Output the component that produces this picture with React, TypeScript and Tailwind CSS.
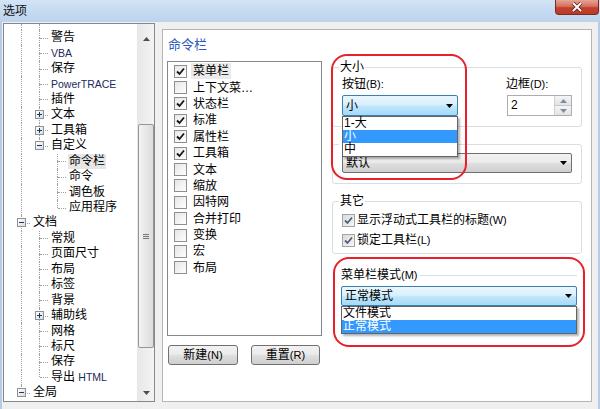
import type { ReactNode } from "react"

type TreeRow = {
    label: ReactNode
    guides: boolean[]
    last?: boolean
    box?: "+" | "-"
    sel?: boolean
}

const Lat = ({ children }: { children: ReactNode }) => (
    <span className="text-[10.5px] text-[#1b2a5c]">{children}</span>
)

const tree: TreeRow[] = [
    { label: "警告", guides: [true] },
    { label: <Lat>VBA</Lat>, guides: [true] },
    { label: "保存", guides: [true] },
    { label: <Lat>PowerTRACE</Lat>, guides: [true] },
    { label: "插件", guides: [true] },
    { label: "文本", guides: [true], box: "+" },
    { label: "工具箱", guides: [true], box: "+" },
    { label: "自定义", guides: [true], box: "-", last: true },
    { label: "命令栏", guides: [true, false], sel: true },
    { label: "命令", guides: [true, false] },
    { label: "调色板", guides: [true, false] },
    { label: "应用程序", guides: [true, false], last: true },
    { label: "文档", guides: [], box: "-" },
    { label: "常规", guides: [true] },
    { label: "页面尺寸", guides: [true] },
    { label: "布局", guides: [true] },
    { label: "标签", guides: [true] },
    { label: "背景", guides: [true] },
    { label: "辅助线", guides: [true], box: "+" },
    { label: "网格", guides: [true] },
    { label: "标尺", guides: [true] },
    { label: "保存", guides: [true] },
    { label: <>导出 <Lat>HTML</Lat></>, guides: [true], last: true },
    { label: "全局", guides: [], box: "-", last: true },
]

const commands: [string, boolean][] = [
    ["菜单栏", true],
    ["上下文菜…", false],
    ["状态栏", true],
    ["标准", true],
    ["属性栏", true],
    ["工具箱", true],
    ["文本", false],
    ["缩放", false],
    ["因特网", false],
    ["合并打印", false],
    ["变换", false],
    ["宏", false],
    ["布局", false],
]

function Guide({ on }: { on: boolean }) {
    return (
        <div className="relative w-[18px] self-stretch">
            {on && <div className="absolute left-[9px] top-0 bottom-0 border-l border-dotted border-[#a0a0a0]" />}
        </div>
    )
}

function Row({ row }: { row: TreeRow }) {
    return (
        <div className="flex h-[15.45px] items-center">
            {row.guides.map((g, i) => <Guide key={i} on={g} />)}
            <div className="relative w-[18px] self-stretch">
                <div className="absolute left-[9px] top-0 h-1/2 border-l border-dotted border-[#a0a0a0]" />
                {!row.last && <div className="absolute left-[9px] top-1/2 bottom-0 border-l border-dotted border-[#a0a0a0]" />}
                <div className="absolute left-[10px] right-0 top-1/2 border-t border-dotted border-[#a0a0a0]" />
                {row.box && (
                    <div className="absolute left-[5px] top-[3px] flex h-[9px] w-[9px] items-center justify-center border border-[#919191] bg-gradient-to-br from-white to-[#d6dde6]">
                        <div className="h-px w-[5px] bg-[#1e395b]" />
                        {row.box === "+" && <div className="absolute h-[5px] w-px bg-[#1e395b]" />}
                    </div>
                )}
            </div>
            <span className={`ml-[2px] whitespace-nowrap px-[1px] leading-[15px] ${row.sel ? "bg-[#e6e6e6]" : ""}`}>{row.label}</span>
        </div>
    )
}

function Arrow({ up, color = "#4d4d4d" }: { up?: boolean; color?: string }) {
    return (
        <svg width="7" height="4" viewBox="0 0 7 4">
            <path d={up ? "M0 4 L3.5 0 L7 4 Z" : "M0 0 L7 0 L3.5 4 Z"} fill={color} />
        </svg>
    )
}

function Scrollbar() {
    return (
        <div className="flex w-[17px] flex-col border-l border-[#e6e6e6] bg-gradient-to-r from-[#e8e8e8] to-[#f4f4f4]">
            <div className="flex h-[20px] items-end justify-center pb-[3px]">
                <Arrow up />
            </div>
            <div className="flex-1">
                <div className="mx-auto mt-[80px] flex h-[224px] w-[16px] items-center justify-center rounded-[2px] border border-[#979797] bg-gradient-to-r from-[#f3f3f3] to-[#dcdcdc]">
                    <div className="flex flex-col gap-[1px]">
                        <div className="h-px w-[6px] bg-[#777]" />
                        <div className="h-px w-[6px] bg-[#777]" />
                        <div className="h-px w-[6px] bg-[#777]" />
                    </div>
                </div>
            </div>
            <div className="flex h-[17px] items-center justify-center">
                <Arrow />
            </div>
        </div>
    )
}

function Check({ on, color = "#141414", soft }: { on: boolean; color?: string; soft?: boolean }) {
    return (
        <div className={`flex h-[13px] w-[13px] shrink-0 items-center justify-center border ${soft ? "border-[#a3a3a3] bg-gradient-to-br from-[#dcdcdc] to-[#f6f6f6]" : "border-[#8e8f8f] bg-gradient-to-br from-[#e6e6e6] to-white"}`}>
            {on && (
                <svg width="9" height="9" viewBox="0 0 9 9">
                    <path d="M1 4.5 L3.5 7 L8 1.5" stroke={color} strokeWidth="1.8" fill="none" />
                </svg>
            )}
        </div>
    )
}

function Combo({ text, focused, className, children }: { text: string; focused?: boolean; className: string; children?: ReactNode }) {
    return (
        <div className={`relative ${className}`}>
            <div
                className={`flex h-full items-center justify-between rounded-[2px] border pl-[3px] pr-[4px] ${
                    focused
                        ? "border-[#3c7fb1] bg-[linear-gradient(to_bottom,#eaf6fd_0%,#d9f0fc_45%,#bee6fd_55%,#a7d9f5_100%)]"
                        : "border-[#707070] bg-[linear-gradient(to_bottom,#f2f2f2_0%,#ebebeb_45%,#dddddd_55%,#cfcfcf_100%)]"
                }`}
            >
                <span className="leading-[14px]">{text}</span>
                <Arrow color="#000" />
            </div>
            {children}
        </div>
    )
}

function DropList({ items, sel }: { items: string[]; sel: number }) {
    return (
        <div className="absolute left-0 right-0 top-full z-10 border border-[#646464] bg-white shadow-[2px_2px_2px_rgba(0,0,0,0.3)]">
            {items.map((t, i) => (
                <div key={t} className={`h-[13px] pl-[1px] leading-[13px] ${i === sel ? "bg-[#3399ff] text-white" : ""}`}>{t}</div>
            ))}
        </div>
    )
}

function Button({ children, w }: { children: ReactNode; w: string }) {
    return (
        <div className={`flex h-[20px] ${w} items-center justify-center rounded-[3px] border border-[#707070] bg-[linear-gradient(to_bottom,#f2f2f2_0%,#ebebeb_45%,#dddddd_55%,#cfcfcf_100%)] leading-[14px]`}>
            {children}
        </div>
    )
}

const Acc = ({ children }: { children: ReactNode }) => <span className="text-[11px]">{children}</span>

export default function App() {
    return (
        <div className="relative flex h-[409px] w-[600px] flex-col overflow-hidden bg-[#f0f0f0] font-['Liberation_Sans','Noto_Sans_CJK_SC',sans-serif] text-[12px] text-black">
            {/* title bar */}
            <div className="flex h-[22px] items-start justify-between bg-gradient-to-b from-[#d3e4f6] via-[#c6dbf1] to-[#bcd3ec] pl-[3px]">
                <span className="mt-[4px] leading-[14px] text-[#111]">选项</span>
                <div className="mr-[1px] flex h-[15px] w-[44px] items-center justify-center rounded-b-[4px] border border-t-0 border-[#7b2a22] bg-[linear-gradient(to_bottom,#e4a597_0%,#d7705f_45%,#c4402e_55%,#b83a28_100%)]">
                    <svg width="12" height="10" viewBox="0 0 12 10">
                        <path d="M2 1 L10 9 M10 1 L2 9" stroke="#4a1810" strokeWidth="3.4" />
                        <path d="M2 1 L10 9 M10 1 L2 9" stroke="#fff" strokeWidth="2" />
                    </svg>
                </div>
            </div>

            {/* body */}
            <div className="flex flex-1 items-start gap-[7px] border-x-2 border-[#b7cde6] pl-[1px] pt-[1px]">
                {/* tree */}
                <div className="flex h-[379px] w-[152px] border border-[#828790] bg-white">
                    <div className="flex-1 overflow-hidden pl-[8px]">
                        <div className="flex h-[6px]">
                            <Guide on />
                            <Guide on />
                        </div>
                        {tree.map((r, i) => <Row key={i} row={r} />)}
                    </div>
                    <Scrollbar />
                </div>

                {/* right panel */}
                <div className="mt-[6px] flex h-[373px] w-[430px] flex-col border border-[#b4b4b4] bg-white">
                    <div className="h-[31px] pl-[5px] pt-[7px] text-[13px] leading-[15px] text-[#2d5bc4]">命令栏</div>
                    <div className="flex">
                        {/* command list */}
                        <div className="ml-[4px] w-[155px]">
                            <div className="h-[275px] border border-[#828790] pl-[6px] pt-[1px]">
                                {commands.map(([t, on], i) => (
                                    <div key={i} className="flex h-[16.4px] items-center">
                                        <Check on={on} />
                                        <span className={`ml-[4px] px-[2px] leading-[16px] ${i === 0 ? "bg-[#ebebeb]" : ""}`}>{t}</span>
                                    </div>
                                ))}
                            </div>
                            <div className="mt-[9px] flex gap-[13px] pl-[1px]">
                                <Button w="w-[70px]">新建<Acc>(N)</Acc></Button>
                                <Button w="w-[69px]">重置<Acc>(R)</Acc></Button>
                            </div>
                        </div>

                        {/* options */}
                        <div className="relative ml-[10px] w-[250px]">
                            <fieldset className="rounded-[3px] border border-[#d5dfe5] px-[9px] pb-[10px]">
                                <legend className="ml-[-3px] px-[1px] leading-[12px]">大小</legend>
                                <div className="flex justify-between">
                                    <div className="w-[116px]">
                                        <div className="mt-[5px] leading-[12px]">按钮<Acc>(B):</Acc></div>
                                        <Combo text="小" focused className="mt-[5px] h-[21px]">
                                            <DropList items={["1-大", "小", "中"]} sel={1} />
                                        </Combo>
                                    </div>
                                    <div className="w-[66px]">
                                        <div className="mt-[5px] leading-[12px]">边框<Acc>(D):</Acc></div>
                                        <div className="ml-[1px] mt-[5px] flex h-[21px] border border-[#abadb3] bg-white">
                                            <span className="flex-1 pl-[3px] leading-[19px]">2</span>
                                            <div className="flex w-[17px] flex-col border-l border-[#d0d0d0]">
                                                <div className="flex flex-1 items-center justify-center border-b border-[#c8c8c8] bg-gradient-to-b from-[#f5f5f5] to-[#e3e3e3]">
                                                    <Arrow up color="#7d8ea8" />
                                                </div>
                                                <div className="flex flex-1 items-center justify-center bg-gradient-to-b from-[#f5f5f5] to-[#e3e3e3]">
                                                    <Arrow color="#7d8ea8" />
                                                </div>
                                            </div>
                                        </div>
                                    </div>
                                </div>
                            </fieldset>

                            <fieldset className="mt-[11px] rounded-[3px] border border-[#d5dfe5] px-[9px] pb-[10px]">
                                <legend className="ml-[-3px] h-[12px] w-[40px]" />
                                <Combo text="默认" className="mt-[3px] h-[20px]" />
                            </fieldset>

                            <fieldset className="mt-[11px] rounded-[3px] border border-[#d5dfe5] px-[9px] pb-[3px]">
                                <legend className="ml-[-3px] px-[1px] leading-[12px]">其它</legend>
                                <div className="mt-[3px] flex h-[20px] items-center gap-[2px]">
                                    <Check on soft color="#50607e" />
                                    <span className="leading-[14px]">显示浮动式工具栏的标题<Acc>(W)</Acc></span>
                                </div>
                                <div className="flex h-[20px] items-center gap-[2px]">
                                    <Check on soft color="#50607e" />
                                    <span className="leading-[14px]">锁定工具栏<Acc>(L)</Acc></span>
                                </div>
                            </fieldset>

                            <div className="mt-[15px] flex h-[12px] items-center pl-[9px] pr-[5px]">
                                <span className="leading-[12px]">菜单栏模式<Acc>(M)</Acc></span>
                                <div className="ml-[2px] flex-1 border-t border-[#d5dfe5]" />
                            </div>
                            <Combo text="正常模式" focused className="ml-[9px] mr-[5px] mt-[5px] h-[20px]">
                                <DropList items={["文件模式", "正常模式"]} sel={1} />
                            </Combo>

                            {/* red annotations */}
                            <div className="pointer-events-none absolute left-[-1px] top-[-7px] z-20 h-[126px] w-[136px] rounded-[16px] border-2 border-[#e8202a]" />
                            <div className="pointer-events-none absolute left-[1px] top-[196px] z-20 h-[90px] w-[252px] rounded-[16px] border-2 border-[#e8202a]" />
                        </div>
                    </div>
                </div>
            </div>
        </div>
    )
}
